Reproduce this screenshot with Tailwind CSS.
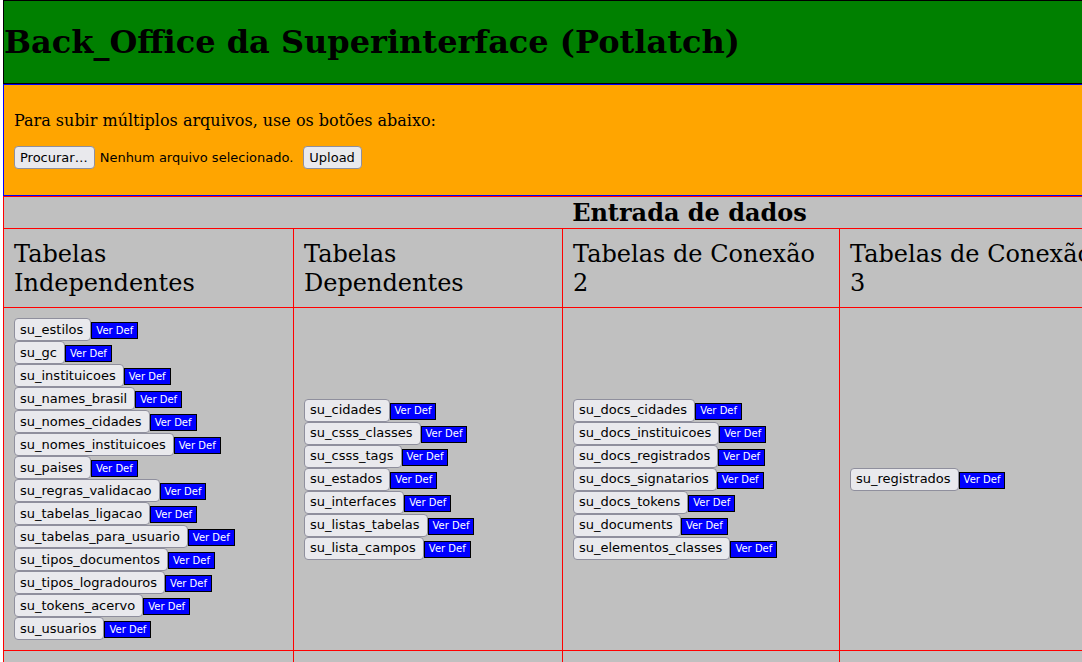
<!DOCTYPE html>
<html lang="pt-BR">
<head>
<meta charset="utf-8">
<title>Back_Office da Superinterface (Potlatch)</title>
<script src="https://cdn.jsdelivr.net/npm/@tailwindcss/browser@4"></script>
</head>
<body class="bg-white text-black font-['DejaVu_Serif',serif] overflow-x-auto">
<div class="w-full h-screen overflow-hidden pl-[3px]">
  <header class="border border-black bg-[#008000] min-w-[1373px] py-[22px]">
    <h1 class="text-[32px] leading-[38px] font-bold">Back_Office da Superinterface (Potlatch)</h1>
  </header>
  <form class="border border-[#0000ff] bg-[#ffa500] min-w-[1373px] px-[10px] pt-[26px] pb-[26px]">
    <p class="text-base leading-5">Para subir múltiplos arquivos, use os botões abaixo:</p>
    <div class="mt-[15px] flex items-center gap-[10px] font-['DejaVu_Sans',sans-serif] text-[13px] leading-4">
      <label class="relative flex items-center gap-[5px]">
        <input type="file" multiple class="absolute inset-0 w-full opacity-0">
        <span class="h-[23px] rounded border border-[#8f8f9d] bg-[#e9e9ed] pl-[5px] pr-[6px] pt-[3px]">Procurar…</span>
        <span>Nenhum arquivo selecionado.</span>
      </label>
      <button type="submit" class="h-[23px] rounded border border-[#8f8f9d] bg-[#e9e9ed] pl-[5px] pr-[6px]">Upload</button>
    </div>
  </form>
  <table class="table-fixed border-collapse w-[1373px] bg-[#c0c0c0] [&_td]:border [&_td]:border-[#ff0000] [&_th]:border [&_th]:border-[#ff0000]">
    <colgroup><col class="w-[290px]"><col class="w-[269px]"><col class="w-[277px]"><col class="w-[277px]"><col></colgroup>
    <thead>
      <tr><th colspan="5" class="p-px text-2xl leading-[29px] font-bold">Entrada de dados</th></tr>
      <tr class="text-left text-2xl leading-[29px]">
        <th class="px-[10px] pt-[11px] pb-[9px] leading-[29px] font-normal">Tabelas Independentes</th>
        <th class="px-[10px] pt-[11px] pb-[9px] leading-[29px] font-normal">Tabelas Dependentes</th>
        <th class="px-[10px] pt-[11px] pb-[9px] leading-[29px] font-normal">Tabelas de Conexão 2</th>
        <th class="px-[10px] pt-[11px] pb-[9px] leading-[29px] font-normal">Tabelas de Conexão 3</th>
        <th></th>
      </tr>
    </thead>
    <tbody>
      <tr id="lists"></tr>
      <tr class="h-10"><td></td><td></td><td></td><td></td><td></td></tr>
    </tbody>
  </table>
</div>
<script>
const columns = [
  ['su_estilos','su_gc','su_instituicoes','su_names_brasil','su_nomes_cidades','su_nomes_instituicoes','su_paises','su_regras_validacao','su_tabelas_ligacao','su_tabelas_para_usuario','su_tipos_documentos','su_tipos_logradouros','su_tokens_acervo','su_usuarios'],
  ['su_cidades','su_csss_classes','su_csss_tags','su_estados','su_interfaces','su_listas_tabelas','su_lista_campos'],
  ['su_docs_cidades','su_docs_instituicoes','su_docs_registrados','su_docs_signatarios','su_docs_tokens','su_documents','su_elementos_classes'],
  ['su_registrados'],
  []
];
document.getElementById('lists').innerHTML = columns.map(names =>
  '<td class="p-[10px] align-middle">' + names.map(name =>
    `<div class="flex items-center font-['DejaVu_Sans',sans-serif]"><button type="button" class="h-[23px] rounded border border-[#8f8f9d] bg-[#e9e9ed] pl-[5px] pr-[7px] text-[13px] leading-4">${name}</button><button type="button" class="mt-[2px] h-[17px] border border-black bg-[#0000ff] px-1 text-[10px] leading-3 text-white">Ver Def</button></div>`
  ).join('') + '</td>').join('');
</script>
</body>
</html>
